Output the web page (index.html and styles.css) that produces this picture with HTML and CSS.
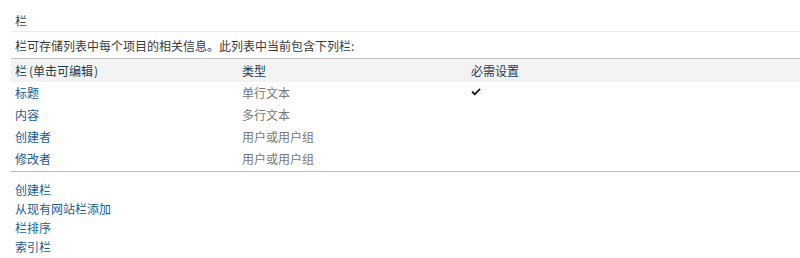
FILE: index.html
```html
<!DOCTYPE html>
<html lang="zh-CN">
<head>
<meta charset="utf-8">
<title>栏</title>
<link rel="stylesheet" href="styles.css">
</head>
<body>
<div class="page">
  <div class="section-title">栏</div>
  <div class="desc">栏可存储列表中每个项目的相关信息。此列表中当前包含下列栏:</div>
  <div class="cols">
    <div class="row head">
      <div class="cell">栏<span class="paren-open">(</span>单击可编辑<span class="paren-close">)</span></div>
      <div class="cell">类型</div>
      <div class="cell">必需设置</div>
    </div>
    <div class="row">
      <div class="cell"><a class="link" href="#">标题</a></div>
      <div class="cell type">单行文本</div>
      <div class="cell"><svg class="check" width="10" height="8" viewBox="0 0 10 8"><path d="M0.4 4.3 L1.9 3 L3.8 5 L8.6 0.3 L9.7 1.4 L3.8 7.5 Z" fill="#111"/></svg></div>
    </div>
    <div class="row">
      <div class="cell"><a class="link" href="#">内容</a></div>
      <div class="cell type">多行文本</div>
      <div class="cell"></div>
    </div>
    <div class="row">
      <div class="cell"><a class="link" href="#">创建者</a></div>
      <div class="cell type">用户或用户组</div>
      <div class="cell"></div>
    </div>
    <div class="row">
      <div class="cell"><a class="link" href="#">修改者</a></div>
      <div class="cell type">用户或用户组</div>
      <div class="cell"></div>
    </div>
  </div>
  <div class="actions">
    <a class="link" href="#">创建栏</a>
    <a class="link" href="#">从现有网站栏添加</a>
    <a class="link" href="#">栏排序</a>
    <a class="link" href="#">索引栏</a>
  </div>
</div>
</body>
</html>
```
FILE: styles.css
```css
html, body {
  margin: 0;
  padding: 0;
  background: #fff;
}
body {
  font-family: "Noto Sans CJK SC", "Liberation Sans", sans-serif;
  font-size: 12px;
  color: #444;
}
.page {
  margin-left: 11px;
}
.section-title {
  height: 19px;
  padding: 12px 0 0 4px;
  line-height: 18px;
  color: #444;
  border-bottom: 1px solid #ebebeb;
}
.desc {
  height: 21px;
  padding: 5px 0 0 4px;
  line-height: 18px;
  color: #3a3a3a;
}
.cols {
  border-top: 1px solid #c2c2c2;
  border-bottom: 1px solid #b8b8b8;
  padding-bottom: 1px;
}
.row {
  display: grid;
  grid-template-columns: 227px 229px 1fr;
  height: 22px;
  line-height: 22px;
}
.row.head {
  background: #f3f3f3;
  height: 23px;
  line-height: 21px;
  color: #1b3b55;
}
.cell {
  padding-left: 4px;
  display: flex;
  align-items: center;
}
.row .cell { height: 100%; }
.paren-open {
  margin-left: 2px;
}
.paren-close {
  margin-left: 1px;
}
.type {
  color: #777;
}
.link {
  color: #1a5c92;
  text-decoration: none;
}
.check {
  display: block;
  margin-top: -2px;
}
.actions {
  display: flex;
  flex-direction: column;
  align-items: flex-start;
  padding: 8px 0 0 4px;
  line-height: 19px;
}
```
